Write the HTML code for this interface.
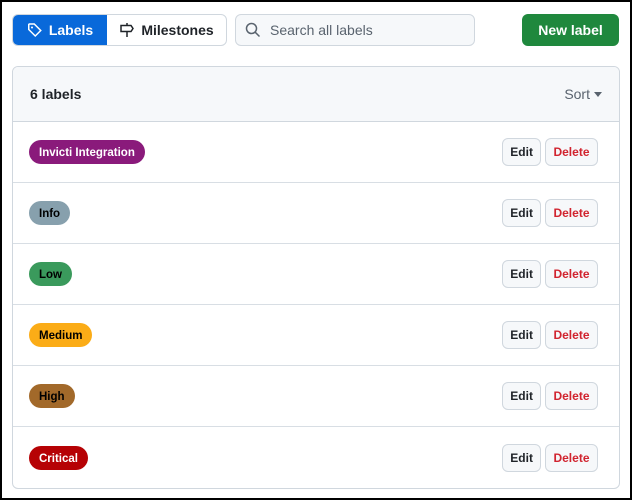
<!DOCTYPE html>
<html><head><meta charset="utf-8"><style>
*{box-sizing:border-box;margin:0;padding:0}
html,body{width:632px;height:500px;overflow:hidden}
body{background:#fff;font-family:"Liberation Sans",sans-serif;color:#1f2328;position:relative;border:2px solid #000}
.tabs{position:absolute;left:10px;top:12px;width:215px;height:32px;border:1px solid #d0d7de;border-radius:6px;display:flex;overflow:hidden}
.tab{display:flex;align-items:center;justify-content:center;font-size:14px;font-weight:bold;gap:6px}
.t1{width:94px;background:#0969da;color:#fff}
.t2{flex:1;color:#1f2328}
.search{position:absolute;left:233px;top:12px;width:240px;height:32px;border:1px solid #d0d7de;border-radius:6px;background:#f6f8fa;display:flex;align-items:center;padding-left:9px;gap:9px;font-size:14px;color:#59636e}
.new{position:absolute;left:520px;top:12px;width:97px;height:32px;background:#1f883d;color:#fff;border-radius:6px;font-size:14px;font-weight:bold;display:flex;align-items:center;justify-content:center}
.box{position:absolute;left:10px;top:64px;width:608px;height:423px;border:1px solid #d0d7de;border-radius:6px;overflow:hidden}
.hd{height:55px;background:#f6f8fa;border-bottom:1px solid #d0d7de;display:flex;align-items:center;justify-content:space-between;padding:0 17px 0 17px;font-size:14px}
.hd b{font-weight:bold}
.sort{color:#59636e;display:flex;align-items:center;gap:4px}
.row{height:61px;border-bottom:1px solid #d8dee4;display:flex;align-items:center;padding:0 21px 0 16px;justify-content:space-between}
.row:last-child{border-bottom:none}
.lab{display:block;height:24px;line-height:22px;padding-top:2px;border-radius:12px;padding-left:10px;padding-right:10px;font-size:11.5px;font-weight:bold}
.btns{display:flex;gap:4px}
.b{height:28px;border:1px solid #d0d7de;border-radius:6px;background:#f6f8fa;font-size:12px;font-weight:bold;display:flex;align-items:center;padding:0 7px}
.d{color:#d1242f;padding:0 7.5px}
</style></head><body>
<div class="tabs"><div class="tab t1"><svg width="16" height="16" viewBox="0 0 16 16" fill="none" stroke="#fff" stroke-width="1.5"><path d="M1.75 2.5v5l6.5 6.5 5.5-5.5-6.5-6.5h-5z"/><circle cx="5" cy="5.5" r="1" fill="#fff" stroke="none"/></svg>Labels</div><div class="tab t2"><svg width="16" height="16" viewBox="0 0 16 16" fill="none" stroke="#1f2328" stroke-width="1.5"><path d="M8 1v2M8 10v5M2 3.5h10l2 3-2 3H2z"/></svg>Milestones</div></div>
<div class="search"><svg width="16" height="16" viewBox="0 0 16 16" fill="none" stroke="#59636e" stroke-width="1.5"><circle cx="6.5" cy="6.5" r="5"/><path d="M10.3 10.3 14.5 14.5"/></svg>Search all labels</div>
<div class="new">New label</div>
<div class="box">
<div class="hd"><b>6 labels</b><span class="sort">Sort <svg width="8" height="5"><path d="M0 0h8L4 5z" fill="#59636e"/></svg></span></div>
<div class="row"><span class="lab" style="background:#8a1a7b;color:#fff">Invicti Integration</span><div class="btns"><span class="b">Edit</span><span class="b d">Delete</span></div></div>
<div class="row"><span class="lab" style="background:#87a0ad;color:#000">Info</span><div class="btns"><span class="b">Edit</span><span class="b d">Delete</span></div></div>
<div class="row"><span class="lab" style="background:#3a9a5c;color:#000">Low</span><div class="btns"><span class="b">Edit</span><span class="b d">Delete</span></div></div>
<div class="row"><span class="lab" style="background:#fbac17;color:#000">Medium</span><div class="btns"><span class="b">Edit</span><span class="b d">Delete</span></div></div>
<div class="row"><span class="lab" style="background:#a2692a;color:#000">High</span><div class="btns"><span class="b">Edit</span><span class="b d">Delete</span></div></div>
<div class="row"><span class="lab" style="background:#b60205;color:#fff">Critical</span><div class="btns"><span class="b">Edit</span><span class="b d">Delete</span></div></div>
</div>
</body></html>
